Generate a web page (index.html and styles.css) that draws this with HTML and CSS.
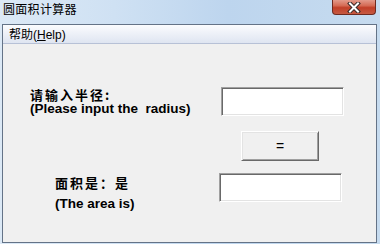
FILE: index.html
```html
<!DOCTYPE html>
<html lang="zh-CN">
<head>
    <meta charset="UTF-8">
    <title>圆面积计算器</title>
    <link rel="stylesheet" href="styles.css">
</head>
<body>
    <div class="window">
        <div class="titlebar">
            <span class="title">圆面积计算器</span>
            <div class="close-btn">
                <svg width="14" height="11" viewBox="0 0 14 11">
                    <path d="M3 1.5 L11 9.5 M11 1.5 L3 9.5" stroke="#3a2a28" stroke-width="4" stroke-linecap="square"/>
                    <path d="M3 1.5 L11 9.5 M11 1.5 L3 9.5" stroke="#ffffff" stroke-width="2" stroke-linecap="square"/>
                </svg>
            </div>
        </div>

        <div class="frame">
            <div class="menubar">
                <span class="menu-item">帮助(<u>H</u>elp)</span>
            </div>

            <div class="client">
                <!-- radius input -->
                <div class="row row-radius">
                    <div class="label label-radius">
                        <div class="cn">请输入半径:</div>
                        <div class="en">(Please input the&nbsp; radius)</div>
                    </div>
                    <input class="field" type="text">
                </div>

                <div class="row row-button">
                    <button class="calc-btn">=</button>
                </div>

                <!-- result -->
                <div class="row row-area">
                    <div class="label label-area">
                        <div class="cn">面积是：是</div>
                        <div class="en">(The area is)</div>
                    </div>
                    <input class="field" type="text">
                </div>
            </div>
        </div>
    </div>
</body>
</html>
```

FILE: styles.css
```css
body {
    margin: 0;
    padding: 0;
    font-family: "Liberation Sans", "Noto Sans CJK SC", sans-serif;
    background-color: #bcd4ec;
}

.window {
    width: 380px;
    height: 244px;
    overflow: hidden;
    background: linear-gradient(90deg, #dce9f6 0%, #cfe1f3 30%, #bdd5ee 60%, #c6dbef 100%);
}

/* Title bar */
.titlebar {
    height: 24px;
    display: flex;
    justify-content: space-between;
    align-items: flex-start;
}

.title {
    font-family: "Noto Sans CJK SC", sans-serif;
    font-size: 12px;
    line-height: 14px;
    color: #000;
    padding: 2px 0 0 3px;
    letter-spacing: 0.3px;
}

.close-btn {
    width: 42px;
    height: 14px;
    margin-right: 4px;
    border: 1px solid #6e2a20;
    border-top: none;
    border-radius: 0 0 4px 4px;
    background: linear-gradient(#e39a8a 0%, #d56b55 40%, #c13f28 55%, #c65a42 100%);
    display: flex;
    justify-content: center;
    align-items: center;
}

/* Frame around menu + client */
.frame {
    width: 373px;
    height: 217px;
    margin-left: 2px;
    border: 1px solid #647387;
    display: flex;
    flex-direction: column;
}

.menubar {
    height: 18px;
    border-bottom: 1px solid #b7c1d6;
    background: linear-gradient(#fbfcfe 0%, #eef1f8 45%, #dfe5f1 100%);
    display: flex;
    align-items: center;
}

.menu-item {
    font-family: "Liberation Sans", "Noto Sans CJK SC", sans-serif;
    font-size: 12px;
    line-height: 14px;
    color: #000;
    padding-left: 6px;
    padding-top: 1px;
}

.menu-item u {
    text-underline-offset: 1px;
}

.client {
    flex: 1;
    background-color: #f0f0f0;
}

.row {
    display: flex;
}

.row-radius {
    margin-top: 43px;
    padding-left: 27px;
    align-items: flex-start;
}

.row-button {
    margin-top: 15px;
    padding-left: 238px;
}

.row-area {
    margin-top: 12px;
    padding-left: 52px;
    align-items: flex-start;
}

.label {
    color: #000;
    font-weight: bold;
}

.label-radius {
    width: 191px;
    padding-top: 1px;
}

.label-area {
    width: 164px;
    padding-top: 3px;
}

.cn {
    font-family: "Noto Sans CJK SC", sans-serif;
    font-size: 13px;
    line-height: 13px;
    letter-spacing: 2px;
}

.en {
    font-family: "Liberation Sans", sans-serif;
    font-size: 13.5px;
    line-height: 13px;
    margin-top: 1px;
}

.label-area .en {
    margin-top: 8px;
}

/* Sunken edit boxes */
.field {
    box-sizing: border-box;
    width: 123px;
    height: 29px;
    margin: 0;
    padding: 0;
    background: #fff;
    border: 1px solid;
    border-color: #a0a0a0 #ffffff #ffffff #a0a0a0;
    box-shadow: inset 1px 1px 0 #696969, inset -1px -1px 0 #e3e3e3;
    outline: none;
}

/* Raised push button */
.calc-btn {
    box-sizing: border-box;
    width: 78px;
    height: 30px;
    margin: 0;
    padding: 0;
    background: #f0f0f0;
    border: 1px solid;
    border-color: #ffffff #696969 #696969 #ffffff;
    box-shadow: inset 1px 1px 0 #e3e3e3, inset -1px -1px 0 #a0a0a0;
    font-family: "Liberation Sans", sans-serif;
    font-size: 14px;
    color: #000;
    cursor: pointer;
}
```
